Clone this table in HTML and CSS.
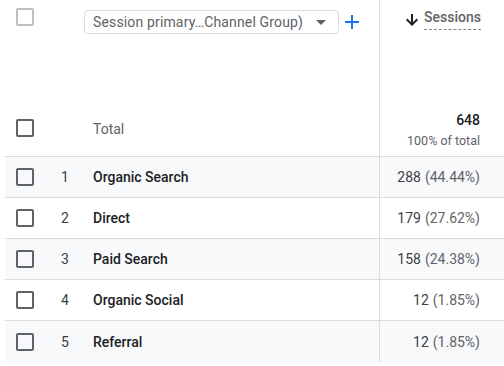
FILE: index.html
```html
<!DOCTYPE html>
<html>
<head>
<meta charset="utf-8">
<link rel="stylesheet" href="styles.css">
</head>
<body>
<div class="table">
  <div class="row head">
    <div class="c-check"><span class="cb disabled"></span></div>
    <div class="c-dim">
      <div class="chip">
        <span class="chip-text">Session primary…Channel Group)</span>
        <svg class="caret" width="10" height="5" viewBox="0 0 10 5"><path d="M0 0h10L5 5z" fill="#5f6368"/></svg>
      </div>
      <svg class="plus" width="14" height="14" viewBox="0 0 14 14"><path d="M6 0h2v6h6v2H8v6H6V8H0V6h6z" fill="#1a73e8"/></svg>
    </div>
    <div class="c-val head-val">
      <svg class="arrow" width="12" height="12" viewBox="0 0 12 12"><path d="M5 0h2v8.2l3.6-3.6L12 6l-6 6-6-6 1.4-1.4L5 8.2z" fill="#202124"/></svg>
      <span class="metric">Sessions</span>
    </div>
  </div>
  <div class="row total">
    <div class="c-check"><span class="cb"></span></div>
    <div class="c-dim"><span class="total-label">Total</span></div>
    <div class="c-val total-val">
      <span class="big">648</span>
      <span class="pct-total">100% of total</span>
    </div>
  </div>
  <div class="row data alt">
    <div class="c-check"><span class="cb"></span></div>
    <div class="c-dim"><span class="idx">1</span><span class="name">Organic Search</span></div>
    <div class="c-val"><span class="num">288</span> <span class="pct">(44.44%)</span></div>
  </div>
  <div class="row data">
    <div class="c-check"><span class="cb"></span></div>
    <div class="c-dim"><span class="idx">2</span><span class="name">Direct</span></div>
    <div class="c-val"><span class="num">179</span> <span class="pct">(27.62%)</span></div>
  </div>
  <div class="row data alt">
    <div class="c-check"><span class="cb"></span></div>
    <div class="c-dim"><span class="idx">3</span><span class="name">Paid Search</span></div>
    <div class="c-val"><span class="num">158</span> <span class="pct">(24.38%)</span></div>
  </div>
  <div class="row data">
    <div class="c-check"><span class="cb"></span></div>
    <div class="c-dim"><span class="idx">4</span><span class="name">Organic Social</span></div>
    <div class="c-val"><span class="num">12</span> <span class="pct">(1.85%)</span></div>
  </div>
  <div class="row data alt last">
    <div class="c-check"><span class="cb"></span></div>
    <div class="c-dim"><span class="idx">5</span><span class="name">Referral</span></div>
    <div class="c-val"><span class="num">12</span> <span class="pct">(1.85%)</span></div>
  </div>
</div>
</body>
</html>
```

FILE: styles.css
```css
* { box-sizing: border-box; }
html, body { margin: 0; padding: 0; background: #fff; }
body {
  font-family: Roboto, "Liberation Sans", Arial, sans-serif;
  font-size: 14px;
  color: #202124;
  width: 504px;
  height: 366px;
  overflow: hidden;
}
.table {
  margin-left: 5px;
  width: 499px;
}
.row {
  display: grid;
  grid-template-columns: 40px 334px 125px;
  border-bottom: 1px solid #dadce0;
}
.row.last { border-bottom: none; }
.row.alt { background: #f8f9fa; }
.c-check {
  display: flex;
  justify-content: flex-start;
  padding-left: 11px;
}
.c-dim {
  display: flex;
  align-items: center;
}
.c-val {
  border-left: 1px solid #dadce0;
  display: flex;
  justify-content: flex-end;
  align-items: center;
  padding-right: 24px;
}
.cb {
  display: block;
  width: 18px;
  height: 18px;
  border: 2px solid #5f6368;
  border-radius: 2px;
}
.cb.disabled { border-color: #bdc1c6; }

/* header */
.row.head { height: 99px; border-bottom: none; }
.head .c-check { padding-top: 8px; }
.head .c-dim { align-items: flex-start; padding-top: 10px; padding-left: 39px; }
.chip {
  display: flex;
  align-items: center;
  width: 255px;
  height: 24px;
  border: 1px solid #dadce0;
  border-radius: 4px;
  padding-left: 8px;
  padding-right: 12px;
  color: #5f6368;
}
.chip-text { flex: 1; white-space: nowrap; letter-spacing: 0.15px; }
.caret { display: block; }
.plus { display: block; margin-left: 6px; margin-top: 5px; }
.head-val { align-items: flex-start; padding-top: 9px; padding-right: 23px; }
.arrow { display: block; margin-top: 5px; margin-right: 6px; }
.metric {
  font-weight: 500;
  color: #5f6368;
  padding-bottom: 3px;
  border-bottom: 1px dashed #80868b;
  line-height: 17px;
}

/* total */
.row.total { height: 58px; }
.total .c-check { align-items: center; }
.total-label { padding-left: 48px; color: #5f6368; padding-top: 2px; }
.total-val { flex-direction: column; align-items: flex-end; justify-content: center; gap: 5px; padding-top: 6px; }
.big { font-weight: 500; color: #202124; line-height: 16px; }
.pct-total { font-size: 12.5px; color: #5f6368; line-height: 16px; }

/* data */
.row.data { height: 41px; }
.data .c-check { align-items: center; }
.idx { width: 48px; padding-left: 16px; color: #3c4043; }
.name { font-weight: 500; color: #202124; }
.num { color: #3c4043; white-space: pre; }
.pct { color: #5f6368; margin-left: 4px; }
```
